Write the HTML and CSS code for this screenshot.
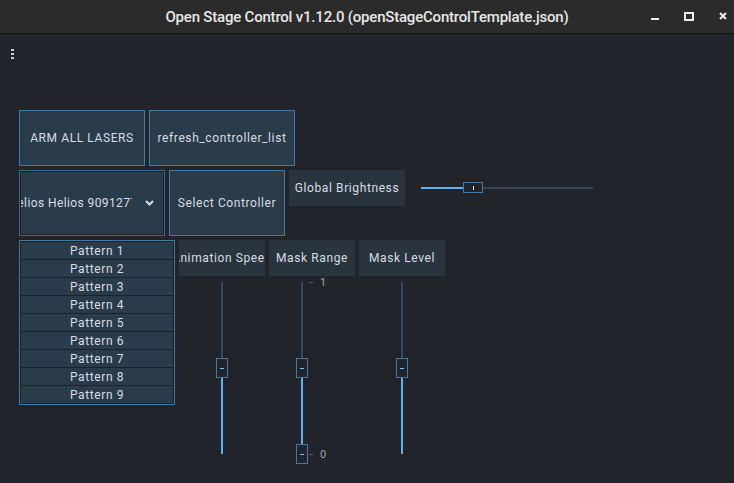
FILE: index.html
```html
<!DOCTYPE html>
<html>
<head>
<meta charset="utf-8">
<link rel="stylesheet" href="styles.css">
</head>
<body>
<div class="titlebar">
  <div class="title">Open Stage Control v1.12.0 (openStageControlTemplate.json)</div>
  <div class="winbtns">
    <svg class="wb" width="10" height="10" viewBox="0 0 10 10"><rect x="1" y="7" width="8" height="2" fill="#f0f0f0"/></svg>
    <svg class="wb" width="10" height="10" viewBox="0 0 10 10"><rect x="1" y="2" width="8" height="7" fill="none" stroke="#f0f0f0" stroke-width="2"/></svg>
    <svg class="wb" width="10" height="10" viewBox="0 0 10 10"><path d="M2 2 L8 8 M8 2 L2 8" stroke="#f0f0f0" stroke-width="2"/></svg>
  </div>
</div>
<div class="app">
  <div class="menu"><span></span><span></span><span></span></div>
  <div class="panel">
    <div class="row">
      <div class="btn w126 h56">ARM ALL LASERS</div>
      <div class="btn w146 h56">refresh_controller_list</div>
    </div>
    <div class="row">
      <div class="dropdown">
        <div class="dd-text"><span>Helios Helios 90912771</span></div>
        <svg class="chev" width="9" height="6" viewBox="0 0 9 6"><path d="M1 1 L4.5 4.5 L8 1" fill="none" stroke="#d8dde2" stroke-width="2"/></svg>
      </div>
      <div class="btn w116 h66">Select Controller</div>
      <div class="bright">
        <div class="label w116">Global Brightness</div>
        <div class="hslider">
          <div class="htrack">
            <div class="hfill" style="width:42px"></div>
            <div class="hknob" style="left:42px"><i></i></div>
          </div>
        </div>
      </div>
    </div>
    <div class="row">
      <div class="list">
        <div class="item">Pattern 1</div>
        <div class="item">Pattern 2</div>
        <div class="item">Pattern 3</div>
        <div class="item">Pattern 4</div>
        <div class="item">Pattern 5</div>
        <div class="item">Pattern 6</div>
        <div class="item">Pattern 7</div>
        <div class="item">Pattern 8</div>
        <div class="item">Pattern 9</div>
      </div>
      <div class="col">
        <div class="label clip"><span>Animation Speed</span></div>
        <div class="vgroup">
          <div class="vslider">
            <div class="vtrack"><div class="vfill" style="top:96px;height:76px"></div></div>
            <div class="vknob" style="top:76px"><i></i></div>
          </div>
        </div>
      </div>
      <div class="col">
        <div class="label">Mask Range</div>
        <div class="vgroup range">
          <div class="vslider">
            <div class="vtrack"><div class="vfill" style="top:96px;height:66px"></div></div>
            <div class="vknob" style="top:76px"><i></i></div>
            <div class="vknob" style="top:162px"><i></i></div>
          </div>
          <div class="scale">
            <div class="tick"><b></b><span>1</span></div>
            <div class="tick"><b></b><span>0</span></div>
          </div>
        </div>
      </div>
      <div class="col">
        <div class="label">Mask Level</div>
        <div class="vgroup">
          <div class="vslider">
            <div class="vtrack"><div class="vfill" style="top:96px;height:76px"></div></div>
            <div class="vknob" style="top:76px"><i></i></div>
          </div>
        </div>
      </div>
    </div>
  </div>
</div>
</body>
</html>
```
FILE: styles.css
```css
* { box-sizing: border-box; }
html, body { margin: 0; padding: 0; }
body {
  width: 734px; height: 483px; overflow: hidden;
  background: #21242b;
  font-family: Roboto, "Liberation Sans", sans-serif;
  color: #d8dde2;
}
.titlebar {
  height: 34px;
  background: #2b2b2b;
  border-bottom: 1px solid #171717;
  display: flex; align-items: center; justify-content: center;
  position: relative;
}
.title {
  font-family: Roboto, sans-serif;
  font-weight: 500; font-size: 15px;
  color: #e6e6e6;
  letter-spacing: -0.2px;
}
.winbtns {
  position: absolute; right: 6px; top: 11px;
  display: flex; gap: 24px;
}
.wb { display: block; }
.app { padding: 15px 0 0 0; }
.menu {
  margin-left: 11px;
  display: flex; flex-direction: column; gap: 2px; width: 3px;
}
.menu span { display: block; width: 3px; height: 2px; background: #c9cdd2; }
.panel {
  margin-top: 51px;
  padding-left: 19px;
  display: flex; flex-direction: column; gap: 4px;
}
.row { display: flex; gap: 4px; align-items: flex-start; }
.btn {
  background: #2a3b4a;
  border: 1px solid #4679a2;
  display: flex; align-items: center; justify-content: center;
  font-size: 12px; letter-spacing: 0.6px;
  white-space: nowrap; overflow: hidden;
}
.w126 { width: 126px; }
.w146 { width: 146px; }
.w116 { width: 116px; }
.h56 { height: 56px; }
.h66 { height: 66px; }
.dropdown {
  width: 146px; height: 66px;
  background: #2a3b4a;
  border: 1px solid #41698c;
  box-shadow: inset 0 0 0 1px #1b1f25;
  display: flex; align-items: center;
  padding: 0 10px 0 1px;
  font-size: 12px; letter-spacing: 0.4px;
}
.dd-text {
  width: 111px; overflow: hidden;
  display: flex; justify-content: center; white-space: nowrap;
}
.chev { margin-left: auto; display: block; }
.bright { display: flex; }
.label {
  width: 86px; height: 36px;
  background: #29343f;
  display: flex; align-items: center; justify-content: center;
  font-size: 12px; letter-spacing: 0.6px;
  white-space: nowrap; overflow: hidden;
}
.label.w116 { width: 116px; }
.hslider {
  height: 36px; padding: 0 16px;
  display: flex; align-items: center;
}
.htrack {
  position: relative; width: 172px; height: 2px; background: #34495d;
}
.hfill { height: 2px; background: #5db1f2; }
.hknob {
  position: absolute; top: -5px;
  width: 20px; height: 11px;
  background: #21242b; border: 1px solid #4679a2;
  display: flex; align-items: center; justify-content: center;
}
.hknob i { display: block; width: 1px; height: 4px; background: #d0e4f4; }
.list {
  width: 156px; height: 165px;
  border: 1px solid #4679a2;
  padding: 1px;
  background: #1d2127;
  display: flex; flex-direction: column; gap: 1px;
}
.item {
  height: 17px; flex: none;
  background: #2a3b4a;
  display: flex; align-items: center; justify-content: center;
  font-size: 12px; letter-spacing: 0.6px;
}
.col { width: 86px; display: flex; flex-direction: column; }
.vgroup {
  margin-top: 6px;
  display: flex; justify-content: center;
}
.vslider { position: relative; width: 12px; height: 172px; }
.vtrack {
  position: absolute; left: 5px; top: 0;
  width: 2px; height: 172px; background: #34495d;
}
.vfill { position: absolute; left: 0; width: 2px; background: #5db1f2; }
.vknob {
  position: absolute; left: 0;
  width: 12px; height: 20px;
  background: #21242b; border: 1px solid #4679a2;
  display: flex; align-items: center; justify-content: center;
}
.vknob i { display: block; width: 4px; height: 1px; background: #7cc0f5; }
.range { margin-left: -2px; }
.scale {
  height: 172px;
  display: flex; flex-direction: column; justify-content: space-between;
  margin-left: 1px;
}
.tick {
  height: 10px; margin: -5px 0;
  display: flex; align-items: center;
  font-size: 11px; color: #9ca1a8;
}
.tick b { display: block; width: 4px; height: 1px; background: #59606a; margin-right: 7px; }
```
